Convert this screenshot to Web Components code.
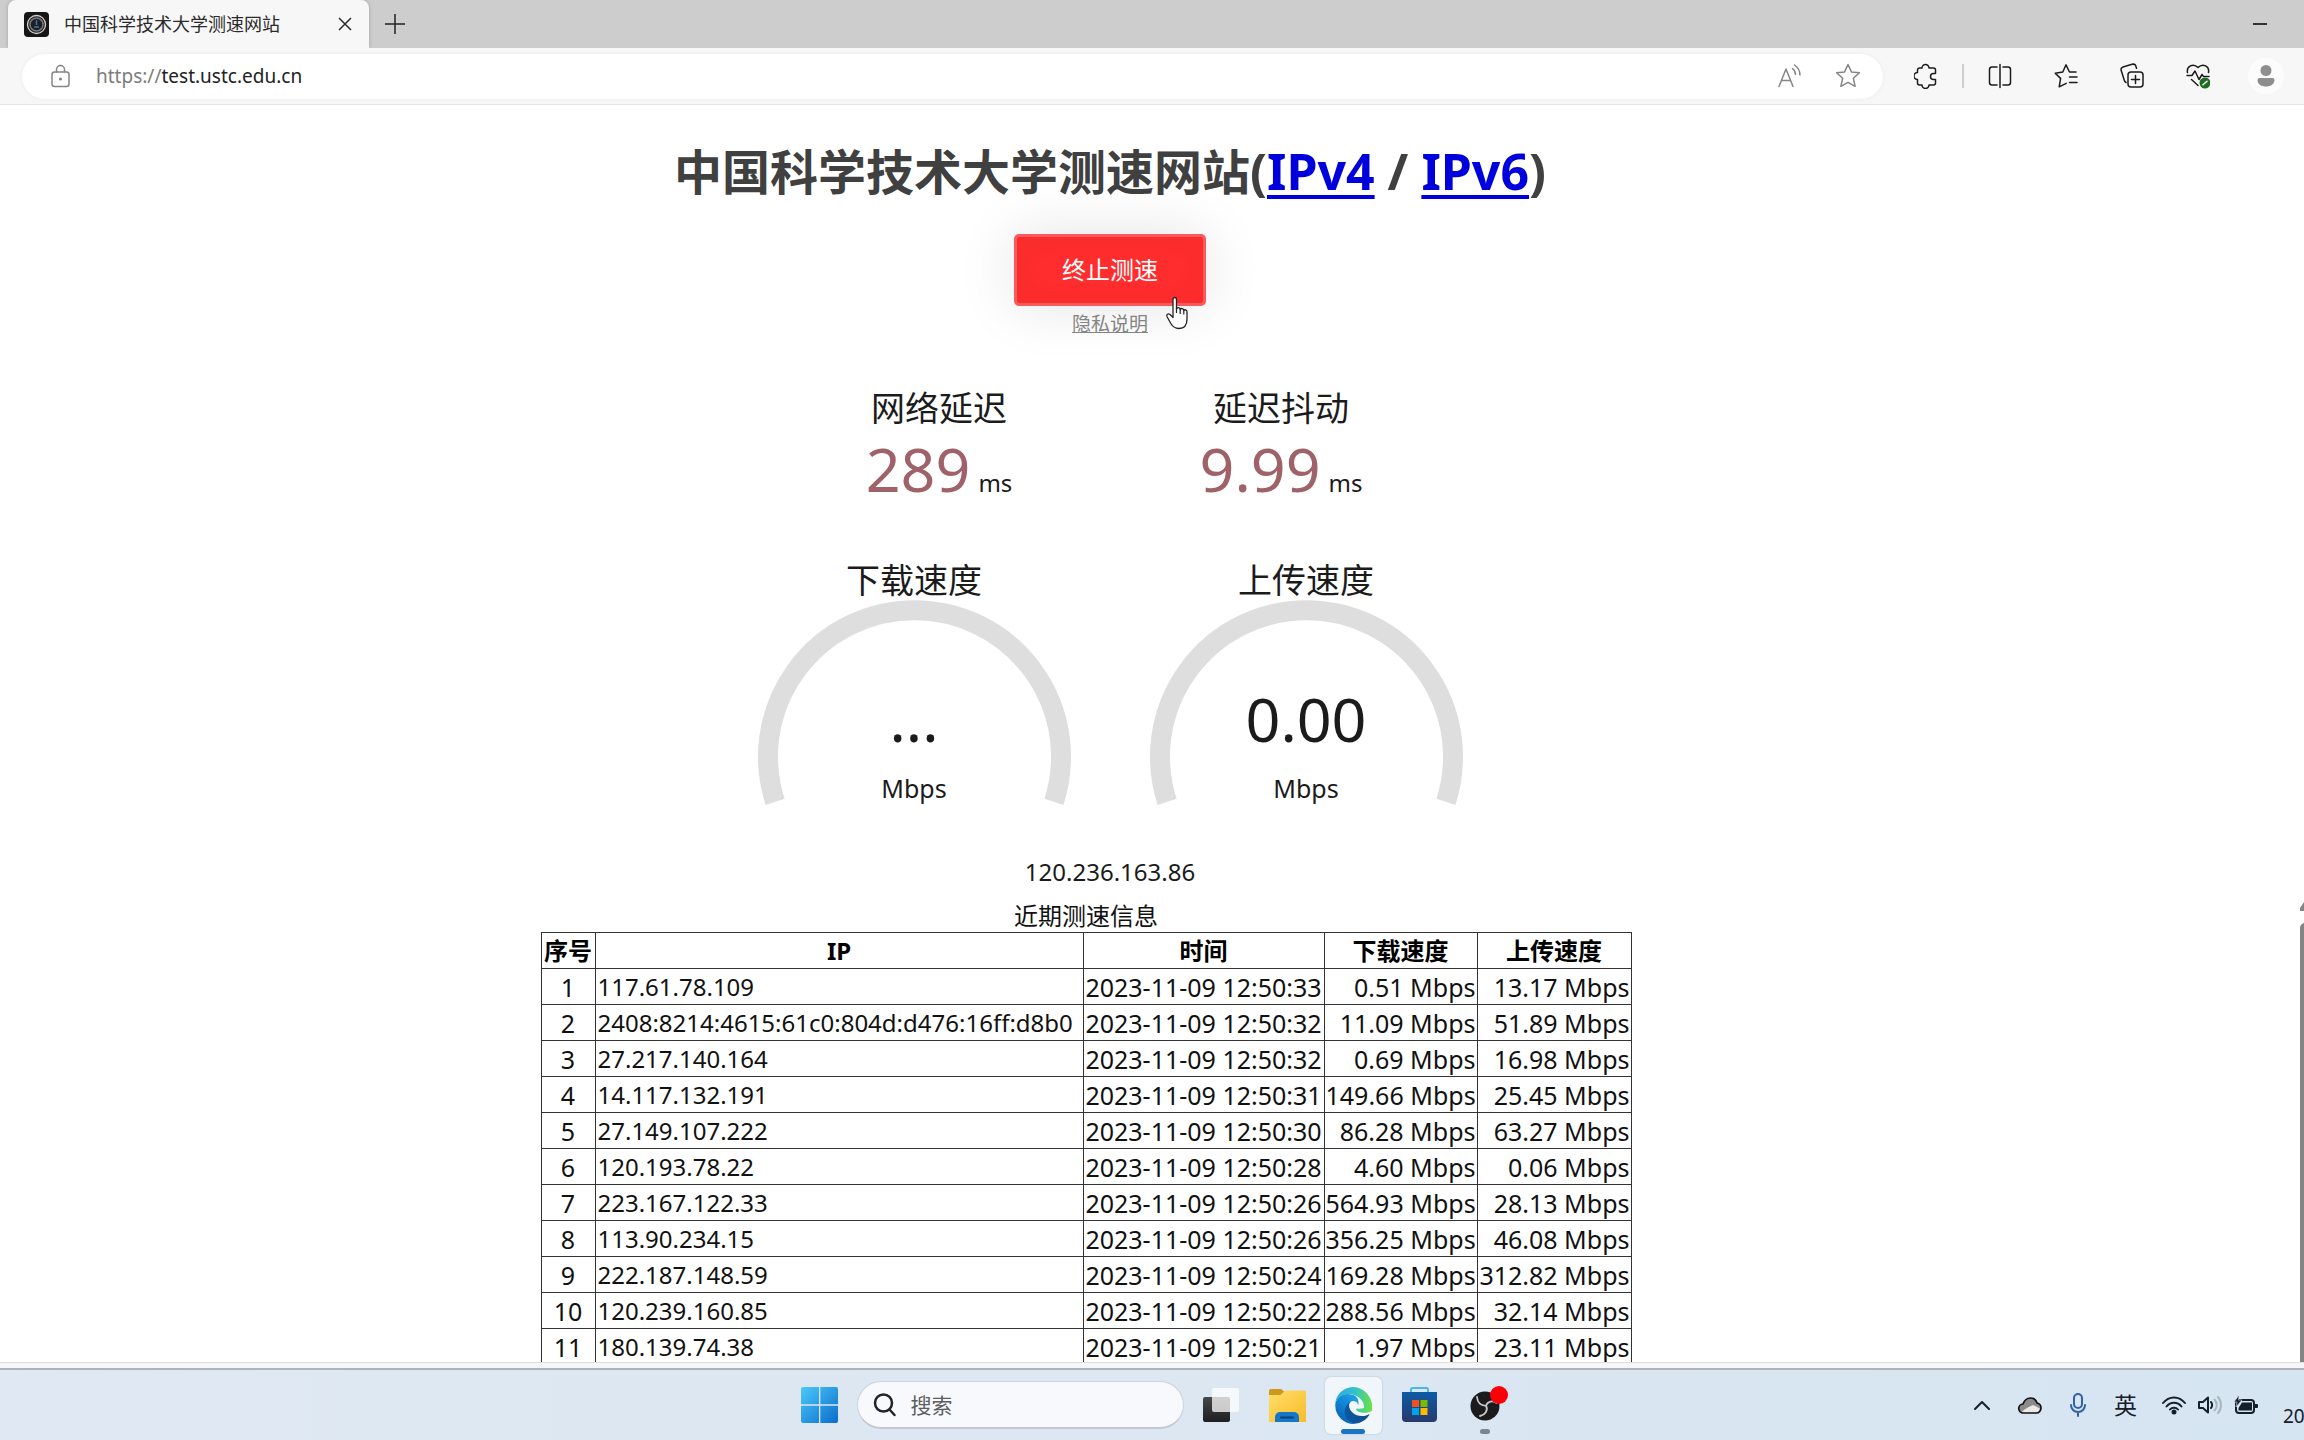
<!DOCTYPE html>
<html lang="zh-CN">
<head>
<meta charset="utf-8">
<title>中国科学技术大学测速网站</title>
<style>
  html, body { margin: 0; height: 100%; }
  body { font-family: "Noto Sans", "Noto Sans CJK SC", sans-serif; color: #1b1b1b; background: #fff; overflow: hidden; }
</style>
</head>
<body>
<desktop-screen>
  <browser-tabs slot="tabs">中国科学技术大学测速网站</browser-tabs>
  <browser-toolbar slot="toolbar"></browser-toolbar>
  <speed-page slot="page">
    <speed-metric slot="ping" value="289" unit="ms">网络延迟</speed-metric>
    <speed-metric slot="ping" value="9.99" unit="ms">延迟抖动</speed-metric>
    <speed-gauge slot="speed" value="..." unit="Mbps">下载速度</speed-gauge>
    <speed-gauge slot="speed" value="0.00" unit="Mbps">上传速度</speed-gauge>
    <speed-log slot="log"></speed-log>
  </speed-page>
  <task-bar slot="taskbar"></task-bar>
</desktop-screen>

<script>
function define(name, markup, setup) {
  customElements.define(name, class extends HTMLElement {
    constructor() {
      super();
      this.attachShadow({ mode: 'open' });
    }
    connectedCallback() {
      if (this.shadowRoot.childNodes.length) return;
      const t = document.createElement('template');
      t.innerHTML = typeof markup === 'function' ? markup(this) : markup;
      this.shadowRoot.append(t.content.cloneNode(true));
      if (setup) setup(this);
    }
  });
}

define('desktop-screen', `
<style>
  :host { display: grid; grid-template-rows: auto auto minmax(0, 1fr) auto auto; height: 100vh; }
  .frame { height: 5px; background: #f5f6f8; border-top: 1px solid #dedede; border-bottom: 2px solid #adb2bb; }
</style>
<slot name="tabs"></slot>
<slot name="toolbar"></slot>
<slot name="page"></slot>
<div class="frame"></div>
<slot name="taskbar"></slot>`);

define('browser-tabs', `
<style>
  :host { display: flex; align-items: stretch; height: 48px; padding-left: 8px; background: #cdcdcd; }
  .tab { display: flex; align-items: center; box-sizing: border-box; width: 361px; padding: 0 8px 0 16px; background: #f7f7f7; border-radius: 8px 8px 0 0; box-shadow: 0 0 4px #0003; }
  .title { flex: 1; margin-left: 15px; font-size: 18px; line-height: 24px; color: #2a2a2a; white-space: nowrap; }
  button { display: grid; place-items: center; border: 0; padding: 0; background: none; }
  .close { width: 32px; height: 32px; }
  .add { width: 52px; }
  .min { width: 60px; margin-left: auto; margin-right: 14px; }
  svg { display: block; }
</style>
<div class="tab">
  <svg width="25" height="25" viewBox="0 0 25 25"><rect width="25" height="25" rx="4" fill="#161616"/><circle cx="12.500" cy="12.500" r="9" fill="#1b2027" stroke="#d9cdc6" stroke-width="1.300"/><circle cx="12.500" cy="12.500" r="6.500" fill="none" stroke="#77797d" stroke-width="1.500"/><path d="M12.500 8v5M10 15h5" stroke="#45719b" stroke-width="1.500"/></svg>
  <span class="title"><slot></slot></span>
  <button class="close" aria-label="关闭标签页"><svg width="14" height="14" viewBox="0 0 14 14"><path d="M1 1l12 12M13 1L1 13" stroke="#2b2b2b" stroke-width="1.500"/></svg></button>
</div>
<button class="add" aria-label="新建标签页"><svg width="22" height="22" viewBox="0 0 22 22"><path d="M11 1v20M1 11h20" stroke="#222" stroke-width="1.500"/></svg></button>
<button class="min" aria-label="最小化"><svg width="14" height="2" viewBox="0 0 14 2"><path d="M0 1h14" stroke="#000" stroke-width="1.500"/></svg></button>`);

define('browser-toolbar', `
<style>
  :host { display: flex; align-items: center; height: 56px; padding: 0 20px 0 22px; background: #f7f7f7; border-bottom: 1px solid #e6e6e6; }
  .address { flex: 1; display: flex; align-items: center; height: 45px; box-sizing: border-box; padding: 0 22px 0 28px; border-radius: 23px; background: #fff; box-shadow: 0 0 4px #0000000f; }
  .url { flex: 1; margin-left: 24px; font-size: 19px; line-height: 26px; }
  .url a { color: #222; text-decoration: none; }
  .url .scheme { color: #7d7d7d; }
  .tools { display: flex; align-items: center; gap: 42px; margin-left: 31px; }
  button { display: block; border: 0; padding: 0; background: none; flex: none; }
  .in { margin-left: 33px; }
  .sep { width: 2px; height: 24px; background: #cfcfcf; margin: 0 -18px; }
  .me { width: 36px; height: 36px; margin-left: -4px; border-radius: 50%; background: #fcfcfc; display: grid; place-items: center; }
  svg { display: block; fill: none; stroke: #1c1c1c; stroke-width: 1.500; stroke-linejoin: round; stroke-linecap: round; }
  .gray { stroke: #858585; }
</style>
<div class="address">
  <svg class="gray" width="22" height="24" viewBox="0 0 22 24"><rect x="2" y="8" width="17" height="14.500" rx="2.500"/><path d="M6.500 8V5.500a4 4 0 0 1 8 0V8"/><circle cx="10.500" cy="15" r=".8" fill="#666"/></svg>
  <div class="url"><a href="https://test.ustc.edu.cn"><span class="scheme">https://</span>test.ustc.edu.cn</a></div>
  <button aria-label="大声朗读此页内容"><svg class="gray" width="24" height="24" viewBox="0 0 24 24"><path d="M1 22.500L8 5l7 17.500M3.500 16.500h9M14.500 4.500c2 1.500 3 3.500 3 6M16.500 1c3.500 2.500 5.500 6 5.500 10"/></svg></button>
  <button class="in" aria-label="收藏此页"><svg class="gray" width="26" height="26" viewBox="0 0 26 26"><path d="M13 1.500l3.400 7.400 8 .9-6 5.500 1.700 8L13 19.300l-7.100 4 1.700-8-6-5.500 8-.9z"/></svg></button>
</div>
<div class="tools">
  <button aria-label="扩展"><svg width="24" height="26" viewBox="0 0 24 26"><path d="M8 5a3.500 3.500 0 0 1 7 0h4.500a2 2 0 0 1 2 2v3.500h-2a2.800 2.800 0 0 0 0 6h2V20a2 2 0 0 1-2 2H15a3.500 3.500 0 0 1-7 0H5.500a2 2 0 0 1-2-2v-3.500a3.500 3.500 0 0 1 0-7V7a2 2 0 0 1 2-2z"/></svg></button>
  <span class="sep"></span>
  <button aria-label="分屏"><svg width="24" height="26" viewBox="0 0 24 26"><path d="M9 4H4a2.500 2.500 0 0 0-2.500 2.500v13A2.500 2.500 0 0 0 4 22h5M15 4h5a2.500 2.500 0 0 1 2.500 2.500v13A2.500 2.500 0 0 1 20 22h-5M12 1.500v23"/></svg></button>
  <button aria-label="收藏夹"><svg width="24" height="26" viewBox="0 0 24 26"><path d="M22 9h-6.500L12 1.800 8.800 9 1.200 10.200l5.400 5.200-1.400 8.400 7-3.500M15.500 14H23M15.500 19.500H23"/></svg></button>
  <button aria-label="集锦"><svg width="24" height="26" viewBox="0 0 24 26"><rect x="8" y="9" width="15" height="15" rx="3"/><path d="M15.500 12.500v8M11.500 16.500h8M6 19.500c-1-.6-1.500-1.300-1.800-2.500L1.200 7.500C.7 5.800 1.500 4.500 3 4l9-2.700c2-.5 3.500.2 4 2.200l.5 1.800"/></svg></button>
  <button aria-label="浏览器概要"><svg width="24" height="26" viewBox="0 0 24 26"><path d="M1.500 9.500C.3 3.500 7-.5 12 4.500 17-.5 23.700 3.500 22.500 9.500M1 12.500h5l3-4.500 4 8.500 3-5 1.500 2H23M5.500 16.500l6.500 6"/><circle cx="19" cy="20" r="5.500" fill="#1f6d25" stroke="none"/><path d="M17 21.800l4-3.600" stroke="#fff"/></svg></button>
  <button class="me" aria-label="个人资料"><svg width="20" height="22" viewBox="0 0 20 22"><g fill="#8e8e8e" stroke="none"><circle cx="10" cy="5.500" r="5.500"/><path d="M3.500 13h13a2 2 0 0 1 2 2c0 4.500-4.500 6.500-8.500 6.500S1.500 19.500 1.500 15a2 2 0 0 1 2-2z"/></g></svg></button>
</div>`);

define('speed-page', `
<style>
  :host { position: relative; display: flex; flex-direction: column; align-items: center; overflow: hidden; padding: 33px 84px 0 0; background: #fff; text-align: center; }
  :host > *, h1, button, .privacy, .row, .ip, .log { flex: none; }
  h1 { margin: 0; font-size: 48px; line-height: 66px; color: #404040; white-space: nowrap; }
  h1 span { font-size: 50px; }
  h1 a { color: #0000dc; text-underline-offset: 5px; text-decoration-thickness: 4px; text-decoration-skip-ink: none; }
  button { width: 192px; height: 72px; margin-top: 29px; border: 3px solid #f95a60; border-radius: 5px; background: #ff2d2d; color: #fff; font: 24px/34px "Noto Sans", "Noto Sans CJK SC", sans-serif; box-shadow: 0 0 60px #0000001c, inset 0 0 30px #0000000a; cursor: pointer; }
  .privacy { margin-top: 3px; font-size: 19px; line-height: 30px; color: #848484; }
  .row { display: flex; justify-content: center; }
  .pings { gap: 142px; margin-top: 46px; }
  .speeds { gap: 79px; margin-top: 36px; }
  .ip { margin-top: 46px; font-size: 24px; line-height: 36px; }
  .log { align-self: stretch; display: flex; justify-content: center; margin-right: 48px; }
  .pointer { position: absolute; left: 1165px; top: 191px; }
  .bar { position: absolute; right: 0; top: 792px; bottom: 0; width: 4px; }
  .bar svg { display: block; }
  .thumb { position: absolute; top: 26px; bottom: 0; left: 0; width: 10px; border-radius: 5px 0 0 0; background: #858585; }
</style>
<h1>中国科学技术大学测速网站<span>(<a href="#v4">IPv4</a> / <a href="#v6">IPv6</a>)</span></h1>
<button>终止测速</button>
<a class="privacy" href="#privacy">隐私说明</a>
<div class="row pings"><slot name="ping"></slot></div>
<div class="row speeds"><slot name="speed"></slot></div>
<div class="ip">120.236.163.86</div>
<div class="log"><slot name="log"></slot></div>
<svg class="pointer" width="26" height="34" viewBox="0 0 26 34"><path d="M8 3.500C8 .8 11.500.8 11.500 3.500V13c.5-2 3.500-2 3.700.8.700-2 3.300-1.600 3.600.8.800-1.500 3.200-1 3.200 1.400V23c0 6-3 9.500-8 9.500-4.500 0-6.500-2-8.500-5.500L2 20.500c-1-2 1.200-3.500 3-2l3 3z" fill="#fff" stroke="#222" stroke-width="1.300" stroke-linejoin="round"/><path d="M11.500 12v5M15.200 13.500V18M18.800 14.500V18.500" stroke="#222" stroke-width="1.200"/></svg>
<div class="bar"><svg width="4" height="14" viewBox="0 0 4 14"><path d="M0 14V11L4 5v9z" fill="#858585"/></svg><div class="thumb"></div></div>`);

define('speed-metric', el => `
<style>
  :host { display: block; width: 200px; }
  .label { font-size: 34px; line-height: 46px; }
  .value { font-size: 61px; line-height: 76px; color: #9f6268; white-space: nowrap; }
  small { font-size: 24px; color: #1b1b1b; margin-left: 8px; }
</style>
<div class="label"><slot></slot></div>
<div class="value">${el.getAttribute('value')}<small>${el.getAttribute('unit')}</small></div>`);

define('speed-gauge', el => `
<style>
  :host { display: block; width: 313px; }
  .label { font-size: 34px; line-height: 46px; }
  .dial { display: grid; justify-items: center; }
  .dial > * { grid-area: 1 / 1; }
  svg { display: block; width: 100%; margin-top: -3px; }
  .text { padding-top: 74px; }
  .value { font-size: 61px; line-height: 84px; }
  .unit { font-size: 25px; line-height: 40px; margin-top: 7px; }
</style>
<div class="label"><slot></slot></div>
<div class="dial">
  <svg viewBox="0 0 313 206"><path d="M17.100 201.800A146.500 146.500 0 1 1 295.900 201.800" fill="none" stroke="#dedede" stroke-width="20"/></svg>
  <div class="text">
    <div class="value">${el.getAttribute('value')}</div>
    <div class="unit">${el.getAttribute('unit')}</div>
  </div>
</div>`);

const rows = [
  ['117.61.78.109', '33', '0.51', '13.17'],
  ['2408:8214:4615:61c0:804d:d476:16ff:d8b0', '32', '11.09', '51.89'],
  ['27.217.140.164', '32', '0.69', '16.98'],
  ['14.117.132.191', '31', '149.66', '25.45'],
  ['27.149.107.222', '30', '86.28', '63.27'],
  ['120.193.78.22', '28', '4.60', '0.06'],
  ['223.167.122.33', '26', '564.93', '28.13'],
  ['113.90.234.15', '26', '356.25', '46.08'],
  ['222.187.148.59', '24', '169.28', '312.82'],
  ['120.239.160.85', '22', '288.56', '32.14'],
  ['180.139.74.38', '21', '1.97', '23.11']
];

define('speed-log', `
<style>
  :host { display: block; }
  table { border-collapse: collapse; table-layout: fixed; width: 1090px; color: #111; }
  caption { font-size: 24px; line-height: 32px; padding-top: 10px; }
  th, td { box-sizing: border-box; height: 36px; padding: 0 1px; border: 1px solid #333; font-size: 25px; line-height: 34px; white-space: nowrap; text-align: right; }
  th { font-size: 24px; text-align: center; padding: 0; color: #000; }
  td:nth-child(1) { text-align: center; }
  td:nth-child(2) { text-align: left; font-size: 24px; padding: 0 2px; }
  td:nth-child(3) { text-align: center; padding: 0; }
</style>
<table>
  <caption>近期测速信息</caption>
  <colgroup><col style="width:54px"><col style="width:488px"><col style="width:241px"><col style="width:153px"><col style="width:154px"></colgroup>
  <thead><tr><th>序号</th><th>IP</th><th>时间</th><th>下载速度</th><th>上传速度</th></tr></thead>
  <tbody>${rows.map((r, i) => `<tr><td>${i + 1}</td><td>${r[0]}</td><td>2023-11-09 12:50:${r[1]}</td><td>${r[2]} Mbps</td><td>${r[3]} Mbps</td></tr>`).join('')}</tbody>
</table>`);

define('task-button', `
<style>
  :host { display: block; }
  button { position: relative; display: grid; place-items: center; box-sizing: border-box; width: 57px; height: 57px; padding: 0; border: 0; border-radius: 6px; background: none; }
  :host([active]) button { background: #f1f6fb; box-shadow: 0 0 2px #0003; }
  :host([active]) button::after, :host([running]) button::after { content: ""; position: absolute; bottom: 0; width: 10px; height: 5px; border-radius: 3px; background: #7d858f; }
  :host([active]) button::after { width: 24px; background: #1a74c4; }
</style>
<button><slot></slot></button>`, el => el.shadowRoot.querySelector('button').setAttribute('aria-label', el.getAttribute('label')));

define('task-bar', `
<style>
  :host { display: flex; align-items: center; height: 70px; background: linear-gradient(90deg, #dfe8f3, #dce7f2 50%, #d5e5f1); overflow: hidden; }
  .side { flex: 1 1 0; min-width: 0; }
  .apps { display: flex; align-items: center; }
  .search { display: flex; align-items: center; box-sizing: border-box; width: 327px; height: 48px; margin: 0 9px; padding: 0 15px; border: 1px solid #cbd3de; border-bottom: 2px solid #c3cad4; border-radius: 24px; background: #f7f9fd; }
  .search input { flex: 1; min-width: 0; margin-left: 14px; padding: 0; border: 0; background: none; outline: 0; font: 21px/30px "Noto Sans", "Noto Sans CJK SC", sans-serif; }
  .search input::placeholder { color: #5b5e63; opacity: 1; }
  .apps task-button + task-button { margin-left: 9px; }
  .tray { display: flex; align-items: center; justify-content: flex-end; color: #16202a; }
  .tray svg { margin-right: 28px; flex: none; }
  .tray .near { margin-right: 12px; }
  .ime { margin-right: 25px; font-size: 23px; line-height: 32px; }
  .clock { width: 21px; overflow: hidden; font-size: 19px; line-height: 26px; padding-top: 22px; white-space: nowrap; }
  svg { display: block; }
  .line { fill: none; stroke: #16202a; stroke-width: 2; stroke-linecap: round; stroke-linejoin: round; }
</style>
<div class="side"></div>
<div class="apps">
  <task-button label="开始"><svg width="37" height="36" viewBox="0 0 37 36"><defs><linearGradient id="w" x1="0" y1="0" x2="1" y2="1"><stop offset="0" stop-color="#4cc9fb"/><stop offset="1" stop-color="#0a6ccb"/></linearGradient></defs><path fill="url(#w)" d="M2 0h16v17.300H0V2a2 2 0 0 1 2-2zM19.300 0H35a2 2 0 0 1 2 2v15.300H19.300zM0 18.700h18V36H2a2 2 0 0 1-2-2zM19.300 18.700H37V34a2 2 0 0 1-2 2H19.300z"/></svg></task-button>
  <label class="search"><svg width="24" height="24" viewBox="0 0 24 24"><g fill="none" stroke="#20242a" stroke-width="2.500" stroke-linecap="round"><circle cx="10.500" cy="10" r="8.500"/><path d="M16.500 16.500l5 5.500"/></g></svg><input type="text" placeholder="搜索" aria-label="搜索"></label>
  <task-button label="任务视图"><svg width="37" height="36" viewBox="0 0 37 36"><defs><linearGradient id="k" x1="0" y1="0" x2="0" y2="1"><stop offset="0" stop-color="#46484a"/><stop offset="1" stop-color="#1d1e1f"/></linearGradient></defs><rect x="0" y="10" width="27" height="25" rx="2" fill="url(#k)"/><rect x="9" y="1" width="27" height="24" rx="2" fill="#fff" fill-opacity=".75"/></svg></task-button>
  <task-button label="文件资源管理器"><svg width="37" height="36" viewBox="0 0 37 36"><defs><linearGradient id="f" x1="0" y1="0" x2="1" y2="1"><stop offset="0" stop-color="#ffdf6b"/><stop offset="1" stop-color="#f9bb2a"/></linearGradient></defs><path d="M0 4a2 2 0 0 1 2-2h10l4 3-4 5H0z" fill="#cf9a1c"/><path d="M0 8h11c2 0 3.500-4.500 6-4.500h18a2 2 0 0 1 2 2V35H0z" fill="url(#f)"/><path d="M6 35v-5a5 5 0 0 1 5-5h14a5 5 0 0 1 5 5v5z" fill="#1677c9"/><path d="M12 30.500h12" stroke="#0b3f78" stroke-width="2" stroke-linecap="round"/></svg></task-button>
  <task-button label="Microsoft Edge" active><svg width="37" height="37" viewBox="0 0 256 256"><defs><linearGradient id="e1" x1="63" y1="177" x2="241" y2="177" gradientUnits="userSpaceOnUse"><stop offset="0" stop-color="#0c59a4"/><stop offset="1" stop-color="#114a8b"/></linearGradient><linearGradient id="e2" x1="157" y1="100" x2="46" y2="221" gradientUnits="userSpaceOnUse"><stop offset="0" stop-color="#1b9de2"/><stop offset=".6" stop-color="#0e7fd0"/><stop offset="1" stop-color="#0a68b5"/></linearGradient><linearGradient id="e3" x1="10" y1="80" x2="250" y2="110" gradientUnits="userSpaceOnUse"><stop offset="0" stop-color="#2fa9df"/><stop offset=".5" stop-color="#32c2cc"/><stop offset="1" stop-color="#66e04b"/></linearGradient></defs><path fill="url(#e1)" d="M231 190c-3 2-7 4-11 5a99 99 0 0 1-35 6c-47 0-88-32-88-74 0-11 7-22 17-28-42 2-53 46-53 72 0 74 68 81 82 81 8 0 20-2 27-4l1-1a128 128 0 0 0 66-53c2-3-2-6-6-4z"/><path fill="url(#e2)" d="M105 241a79 79 0 0 1-23-21 81 81 0 0 1 29-120c4-2 9-4 16-4 10 0 20 5 26 13 4 5 7 12 7 19 0-1 24-79-79-79C38 49 2 90 2 126a130 130 0 0 0 12 56 128 128 0 0 0 156 67 76 76 0 0 1-65-8z"/><path fill="url(#e3)" d="M152 149c-1 1-3 3-3 7s2 7 6 10c20 14 58 12 58 12 15 0 30-4 43-12a87 87 0 0 0 0-58C226-2 126 0 126 0A128 128 0 0 0 2 126c1-43 44-78 92-78 5 0 32 1 57 14 22 12 34 26 42 40 8 14 10 33 10 40 0 0-12 14-51 7z" transform="translate(-2 0)"/></svg></task-button>
  <task-button label="Microsoft Store"><svg width="35" height="36" viewBox="0 0 35 36"><defs><linearGradient id="s" x1="0" y1="0" x2="0" y2="1"><stop offset="0" stop-color="#0e5ba4"/><stop offset="1" stop-color="#263a6e"/></linearGradient></defs><path d="M9 6V2.500C9 1.500 9.700 1 10.500 1h14c.8 0 1.500.5 1.500 1.500V6" fill="none" stroke="#47b9ec" stroke-width="2"/><path d="M0 5h35v26a4 4 0 0 1-4 4H4a4 4 0 0 1-4-4z" fill="url(#s)"/><path fill="#f25022" d="M10 13h7v7h-7z"/><path fill="#7fba00" d="M18.500 13h7v7h-7z"/><path fill="#00a4ef" d="M10 21h7v7h-7z"/><path fill="#ffb900" d="M18.500 21h7v7h-7z"/></svg></task-button>
  <task-button label="OBS Studio" running><svg width="46" height="40" viewBox="-8 2 46 40"><circle cx="15" cy="23" r="14.500" fill="#1b1b1d"/><path d="M7 14c.5 6 4 9 9 8.500M26.500 20c-4-3-9-1.500-10.500 2.500M10 33c5-1 8.500-5.500 6-10.500" fill="none" stroke="#c9c9cb" stroke-width="1.800" stroke-linecap="round"/><circle cx="29" cy="12" r="9" fill="#fb0007"/></svg></task-button>
</div>
<div class="side tray">
  <svg class="line" width="16" height="10" viewBox="0 0 16 10"><path d="M1 9l7-7 7 7"/></svg>
  <svg width="24" height="17" viewBox="0 0 24 17"><path d="M5.500 16a4.500 4.500 0 0 1-.5-9C6.500 3 9 1 12.500 1c3 0 5.500 2 6.500 5 2.500.5 4 2.500 4 5s-2 5-4.500 5z" fill="#8b8b8b"/><path d="M4 15c2-3 7-5 11-7 3 1 6 3 7 4-.5 2.500-2 4-3.500 4h-13z" fill="#ece8e6"/><path d="M5.500 16a4.500 4.500 0 0 1-.5-9C6.500 3 9 1 12.500 1c3 0 5.500 2 6.500 5 2.500.5 4 2.500 4 5s-2 5-4.500 5z" fill="none" stroke="#111" stroke-width="1.700"/></svg>
  <svg class="line" width="16" height="24" viewBox="0 0 16 24" style="stroke:#3160a4"><rect x="4" y="1" width="8" height="14" rx="4"/><path d="M1 12c0 4 3 7 7 7s7-3 7-7M8 19v4"/></svg>
  <span class="ime">英</span>
  <svg class="line near" width="24" height="20" viewBox="0 0 24 20"><path d="M1 8c6-7.500 16-7.500 22 0M4.500 11.500c4-5 11-5 15 0M8 14.500c2-2.500 6-2.500 8 0"/><circle cx="12" cy="17" r="1.500" fill="#16202a"/></svg>
  <svg class="line near" width="24" height="20" viewBox="0 0 24 20"><path d="M1 7v6h4l5 4.500v-15L5 7zM13 7c1.500 1.500 1.500 4.500 0 6"/><path d="M16.500 4.500c3 3 3 8 0 11M20 2c4 4.500 4 11.500 0 16" stroke="#a9b4bf"/></svg>
  <svg width="24" height="20" viewBox="0 0 24 20" style="margin-right:25px"><rect x="2" y="5" width="18" height="13" rx="3" fill="none" stroke="#16202a" stroke-width="2"/><path d="M8 7.500h10v8H4.500V13zM21 9h2a1 1 0 0 1 1 1v2a1 1 0 0 1-1 1h-2z" fill="#16202a"/><path d="M5 0L0 7h3l-1 5 6-7H4.500z" fill="#16202a" stroke="#d6e5f1" stroke-width=".6"/></svg>
  <span class="clock">20</span>
</div>`);
</script>
</body>
</html>
